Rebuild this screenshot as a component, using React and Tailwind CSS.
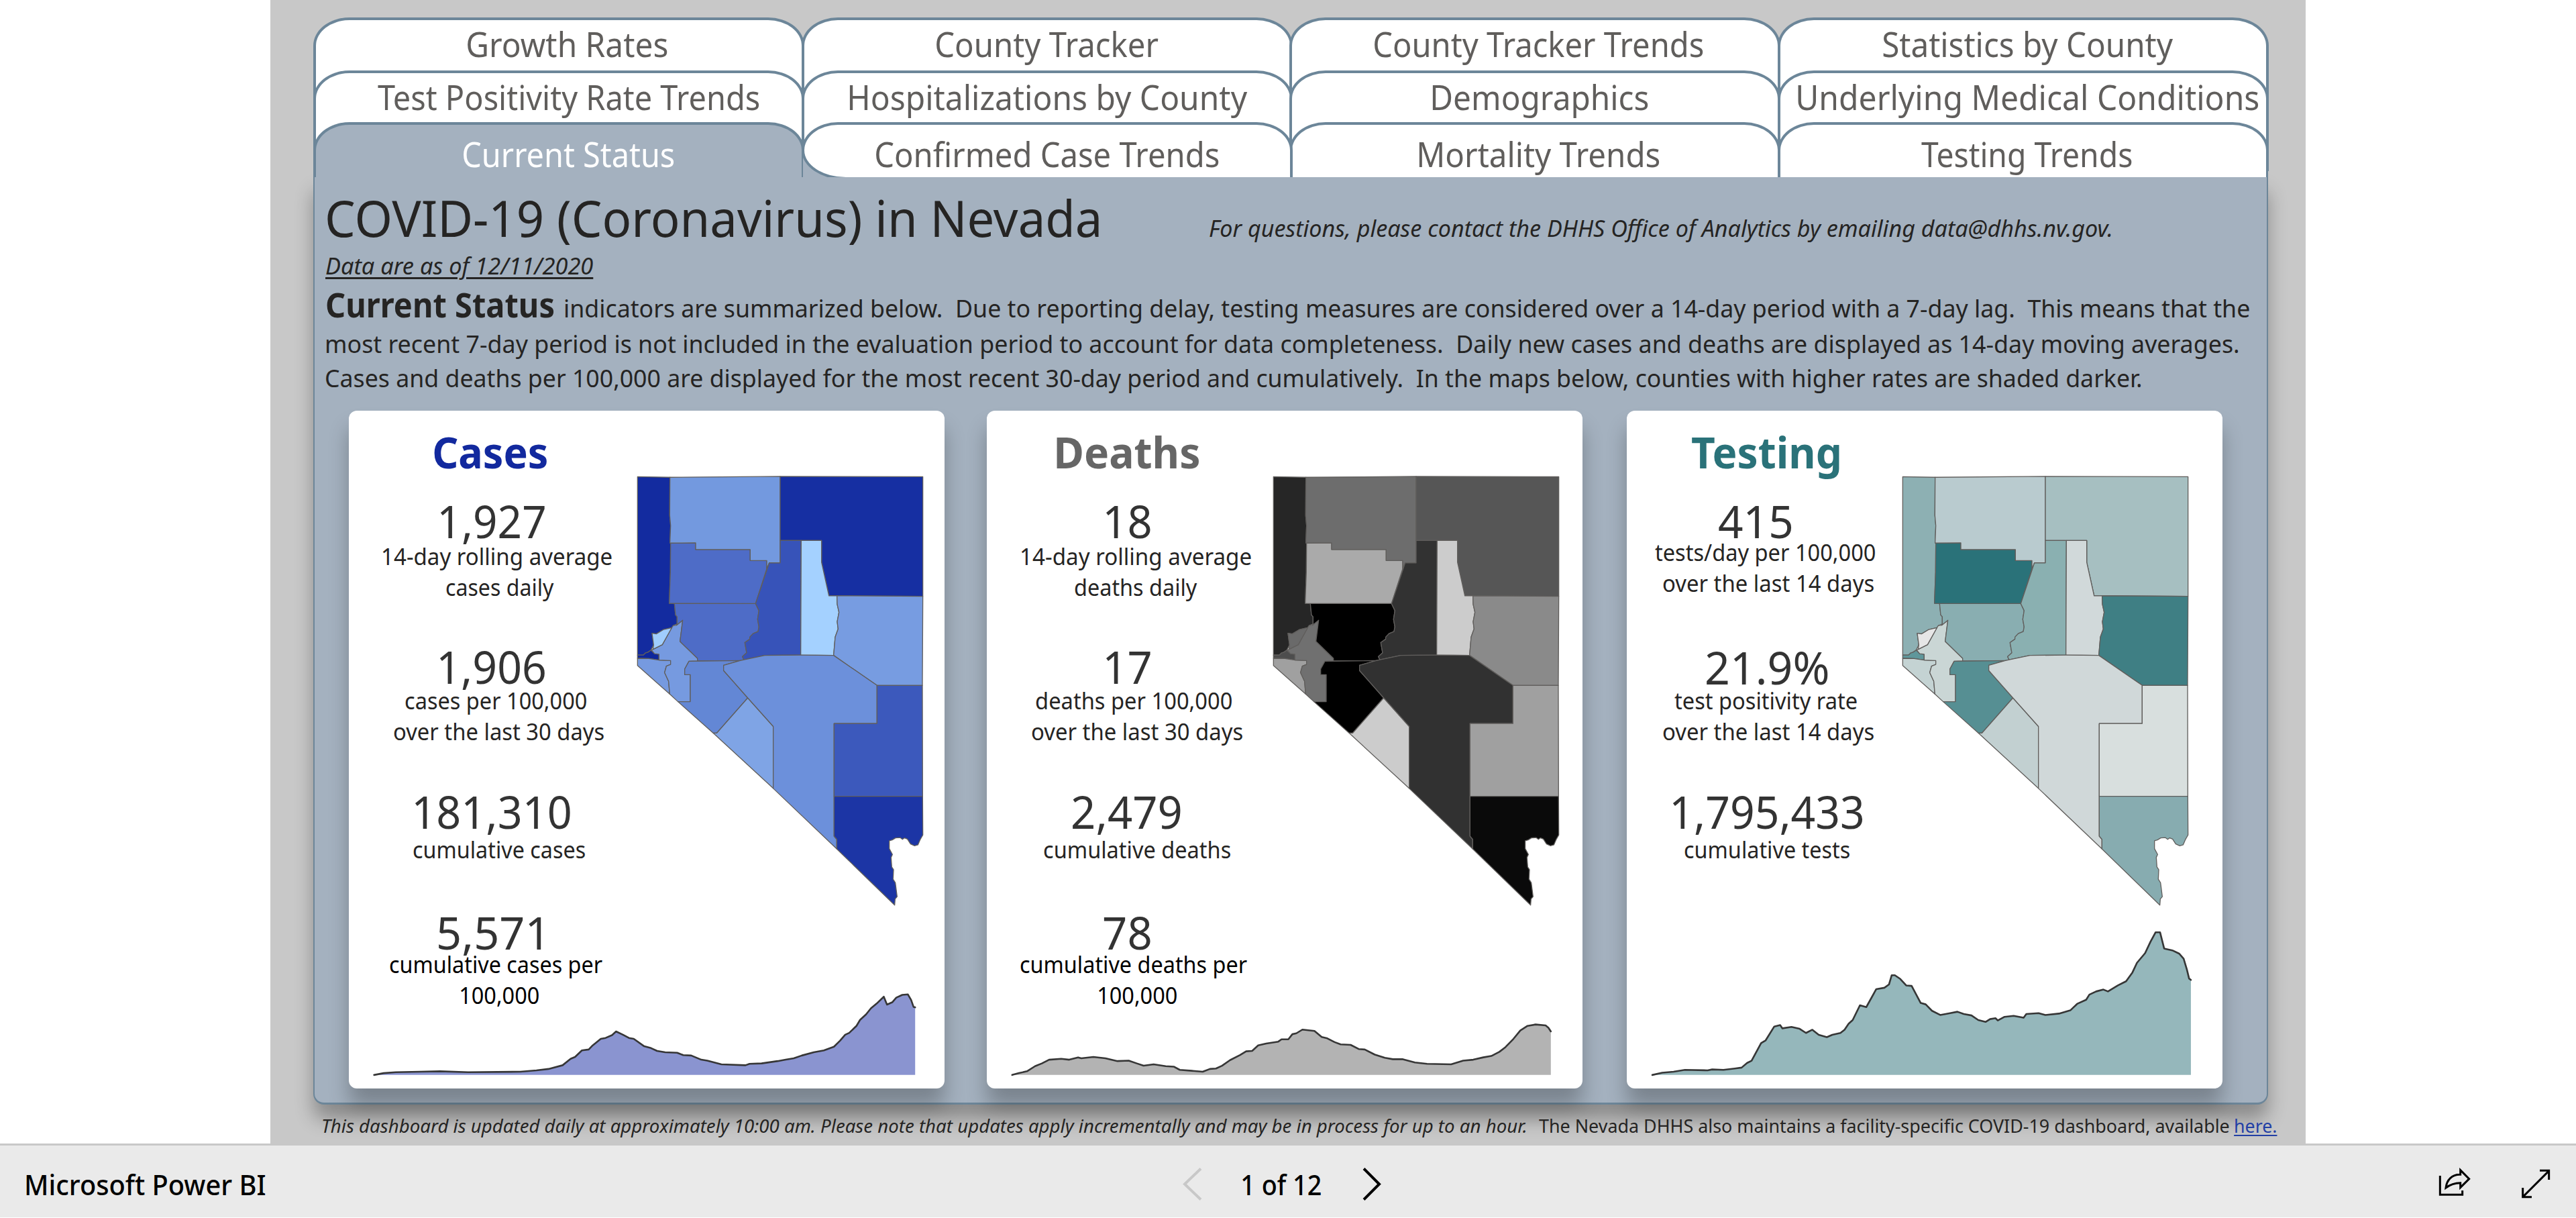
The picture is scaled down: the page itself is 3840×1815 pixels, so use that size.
import React, { useLayoutEffect, useRef, useState } from "react";

/* One line of text whose glyphs are fitted to the width of its box. */
function Fit({ children, className = "", textClass = "" }) {
  const ref = useRef(null);
  const [style, setStyle] = useState(undefined);
  useLayoutEffect(() => {
    const el = ref.current;
    const cs = getComputedStyle(el);
    const ctx = document.createElement("canvas").getContext("2d");
    ctx.font = `${cs.fontStyle} ${cs.fontWeight} ${cs.fontSize} ${cs.fontFamily}`;
    const m = ctx.measureText(children);
    const ink = m.actualBoundingBoxLeft + m.actualBoundingBoxRight;
    const k = el.clientWidth / ink;
    setStyle({ transform: `translateX(${m.actualBoundingBoxLeft * k}px) scaleX(${k})` });
  }, [children]);
  return (
    <div ref={ref} className={`shrink-0 whitespace-pre ${className}`}>
      <span className={`inline-block origin-left ${textClass}`} style={style}>{children}</span>
    </div>
  );
}

const TAB_ROWS = [
  [
    ["Growth Rates", "ml-[226px] w-[298px]"],
    ["County Tracker", "ml-[197px] w-[331px]"],
    ["County Tracker Trends", "ml-[123px] w-[490px]"],
    ["Statistics by County", "ml-[153px] w-[433px]"],
  ],
  [
    ["Test Positivity Rate Trends", "ml-[92px] w-[569px]"],
    ["Hospitalizations by County", "ml-[67px] w-[594px]"],
    ["Demographics", "ml-[209px] w-[322px]"],
    ["Underlying Medical Conditions", "ml-[26px] w-[687px]"],
  ],
];

const LAST_ROW = [
  ["Mortality Trends", "ml-[189px] w-[359px]"],
  ["Testing Trends", "ml-[210px] w-[314px]"],
];

const TAB = "w-[732px] border-4 border-b-0 border-[#6c8699] [border-radius:54px_54px_0_0/42px_42px_0_0]";

function Tabs() {
  return (
    <nav className="relative z-10 ml-[64px] w-[2914px] pt-[26px] text-[51px] leading-[71px] text-[#605e5c]">
      {TAB_ROWS.map((row, i) => (
        <div key={i} className={i === 0 ? "grid h-[79px] grid-cols-[727.5px_727.5px_727.5px_727.5px]" : "grid h-[77px] grid-cols-[727.5px_727.5px_727.5px_727.5px]"}>
          {row.map(([label, box]) => (
            <div key={label} className={`${TAB} h-[150px] bg-white`}>
              <Fit className={box}>{label}</Fit>
            </div>
          ))}
        </div>
      ))}
      <div className="grid h-[82px] grid-cols-[727.5px_727.5px_727.5px_727.5px] overflow-hidden">
        <div className={`${TAB} h-[86px] bg-[#a4b1bf] pt-[8px] text-white`}>
          <Fit className="ml-[220px] w-[314px]">Current Status</Fit>
        </div>
        <div className="relative">
          <div className="absolute bottom-0 left-[2px] h-[41px] w-[70px] bg-[#a4b1bf]" />
          <div className="relative h-[86px] w-[732px] border-4 border-[#6c8699] bg-white pt-[8px] [border-radius:54px_54px_0_66px/42px_42px_0_44px]">
            <Fit className="ml-[107px] w-[511px]">Confirmed Case Trends</Fit>
          </div>
        </div>
        {LAST_ROW.map(([label, box]) => (
          <div key={label} className={`${TAB} h-[86px] bg-white pt-[8px]`}>
            <Fit className={box}>{label}</Fit>
          </div>
        ))}
      </div>
    </nav>
  );
}

const COUNTIES = {
  washoe: "61,47 206,49 205,180 209,215 206,272 209,275 208,375 203,482 226,483 231,522 238,528 238,553 221,558 214,566 178,572 145,587 126,585 133,625 121,643 108,650 96,653 87,660 61,660",
  carson: "61,660 87,660 96,653 108,650 121,643 137,655 157,657 157,677 112,672 61,671",
  douglas: "61,671 112,672 157,677 209,679 209,692 190,698 182,720 200,750 205,794 61,696",
  lyon: "214,566 221,558 236,557 263,540 251,613 329,671 329,680 291,681 272,708 272,727 297,727 297,820 242,820 205,794 200,750 182,720 190,698 209,692 209,679 157,677 157,657 137,655 124,643 130,640 172,624",
  storey: "126,585 145,587 178,572 214,566 172,624 130,640 133,625",
  churchill: "226,483 589,483 604,507 598,537 604,563 600,579 578,586 563,598 563,605 541,617 549,652 530,665 537,676 520,679 329,680 329,671 251,613 263,540 236,557 238,553 238,528 231,522",
  pershing: "209,275 321,274 321,297 565,297 565,335 639,335 639,363 589,483 203,482 208,375",
  humboldt: "206,49 699,46 699,343 650,343 639,363 639,335 565,335 565,297 321,297 321,274 206,275 206,272 209,215 205,180",
  elko: "699,46 1337,47 1337,458 953,456 917,456 884,341 884,266 699,266",
  lander: "699,266 793,266 791,660 630,661 537,676 530,665 549,652 541,617 563,605 563,598 578,586 600,579 604,563 598,537 604,507 589,483 650,343 699,343",
  eureka: "793,266 884,266 884,341 917,456 953,456 954,485 962,513 954,545 958,570 945,598 938,661 791,660",
  whitePine: "953,456 1337,458 1335,764 1132,764 938,661 945,598 958,570 954,545 962,513 954,485",
  mineral: "291,681 520,679 446,695 446,713 554,807 415,928 400,928 242,820 297,820 297,727 272,727 272,708",
  esmeralda: "554,807 668,905 668,1118 400,928 415,928",
  nye: "446,695 520,679 537,676 630,661 791,660 938,661 1132,764 1132,895 940,895 940,1282 952,1293 952,1326 668,1118 668,905 554,807 446,713",
  lincoln: "1132,764 1335,764 1336,1145 940,1145 940,895 1132,895",
  clark: "940,1145 1336,1145 1337,1278 1325,1294 1315,1312 1300,1315 1282,1309 1268,1292 1255,1288 1246,1293 1236,1287 1215,1288 1200,1295 1187,1298 1187,1325 1201,1345 1195,1355 1198,1388 1206,1397 1204,1430 1214,1442 1222,1490 1213,1498 1211,1519 952,1326 952,1293 940,1282",
};

function NevadaMap({ fills }) {
  return (
    <svg className="mt-[78px] h-[680px] w-[470px] shrink-0" viewBox="0 0 1410 1568" preserveAspectRatio="none">
      {Object.entries(COUNTIES).map(([name, points]) => (
        <polygon key={name} points={points} fill={fills[name]} stroke="#605e5c" strokeWidth="1.3" strokeLinejoin="round" vectorEffect="non-scaling-stroke" />
      ))}
    </svg>
  );
}

function Trend({ points, fill, viewBox, className }) {
  const first = points.split(" ")[0].split(",")[0];
  const last = points.split(" ").pop().split(",")[0];
  return (
    <svg className={`shrink-0 ${className}`} viewBox={viewBox} preserveAspectRatio="none">
      <polygon points={`${first},1454 ${points} ${last},1454`} fill={fill} />
      <polyline points={points} fill="none" stroke="#363636" strokeWidth="2.6" strokeLinejoin="round" strokeLinecap="round" vectorEffect="non-scaling-stroke" />
    </svg>
  );
}

const BIG = "text-[68px] leading-[70px] text-[#333333]";
const SMALL = "text-[34px] leading-[46px] text-[#252423]";
const SMALL_BLACK = "text-[34px] leading-[46px] text-black";

const CARDS = [
  {
    title: "Cases",
    titleClass: "ml-[127px] w-[168px] text-[#12299e]",
    lines: [
      ["1,927", BIG, "mt-[28px] ml-[137px] w-[155px]"],
      ["14-day rolling average", SMALL, "-mt-[5px] ml-[51px] w-[341px]"],
      ["cases daily", SMALL, "ml-[145px] w-[161px]"],
      ["1,906", BIG, "mt-[60px] ml-[136px] w-[156px]"],
      ["cases per 100,000", SMALL, "-mt-[7px] ml-[84px] w-[270px]"],
      ["over the last 30 days", SMALL, "ml-[67px] w-[313px]"],
      ["181,310", BIG, "mt-[61px] ml-[99px] w-[231px]"],
      ["cumulative cases", SMALL, "-mt-[1px] ml-[96px] w-[256px]"],
      ["5,571", BIG, "mt-[65px] ml-[134px] w-[153px]"],
      ["cumulative cases per", SMALL_BLACK, "-mt-[10px] ml-[61px] w-[317px]"],
      ["100,000", SMALL_BLACK, "ml-[167px] w-[116px]"],
    ],
    column: "w-[410px]",
    fills: { washoe: "#132b9f", humboldt: "#7399df", elko: "#162fa2", pershing: "#4e6cc7", churchill: "#4e6cc7", lander: "#3753b9", eureka: "#a4d1ff", whitePine: "#779ce1", lincoln: "#3c59bc", clark: "#1c35a5", nye: "#6c90db", esmeralda: "#7fa4e5", mineral: "#6387d5", lyon: "#769ae0", douglas: "#769ae0", storey: "#a0cdfd", carson: "#0f279c" },
    trend: {
      fill: "#8a94d0",
      viewBox: "90 1260 1360 200",
      className: "ml-[34px] h-[138px] w-[815px]",
      points: "96,1454 120,1450 150,1448 210,1447 260,1446 330,1448 460,1447 500,1444 530,1441 565,1433 585,1419 596,1415 613,1401 630,1399 640,1390 660,1376 672,1374 688,1368 698,1360 715,1367 730,1374 742,1376 768,1392 785,1396 800,1402 820,1405 850,1406 865,1411 885,1412 910,1421 925,1423 960,1431 1020,1433 1030,1430 1060,1429 1100,1424 1120,1421 1140,1418 1160,1412 1190,1405 1215,1401 1240,1393 1255,1380 1268,1367 1278,1363 1296,1348 1305,1335 1320,1323 1332,1310 1346,1300 1364,1285 1372,1302 1385,1297 1395,1287 1410,1281 1424,1280 1432,1292 1438,1307 1442,1308",
    },
  },
  {
    title: "Deaths",
    titleClass: "ml-[104px] w-[212px] text-[#666666]",
    lines: [
      ["18", BIG, "mt-[28px] ml-[178px] w-[66px]"],
      ["14-day rolling average", SMALL, "-mt-[5px] ml-[52px] w-[342px]"],
      ["deaths daily", SMALL, "ml-[131px] w-[183px]"],
      ["17", BIG, "mt-[60px] ml-[178px] w-[66px]"],
      ["deaths per 100,000", SMALL, "-mt-[7px] ml-[73px] w-[292px]"],
      ["over the last 30 days", SMALL, "ml-[67px] w-[314px]"],
      ["2,479", BIG, "mt-[61px] ml-[128px] w-[161px]"],
      ["cumulative deaths", SMALL, "-mt-[1px] ml-[85px] w-[278px]"],
      ["78", BIG, "mt-[65px] ml-[174px] w-[70px]"],
      ["cumulative deaths per", SMALL_BLACK, "-mt-[10px] ml-[50px] w-[338px]"],
      ["100,000", SMALL_BLACK, "ml-[167px] w-[116px]"],
    ],
    column: "w-[407px]",
    fills: { washoe: "#262626", humboldt: "#6d6d6d", elko: "#565656", pershing: "#aaaaaa", churchill: "#000000", lander: "#323232", eureka: "#cccccc", whitePine: "#8a8a8a", lincoln: "#a0a0a0", clark: "#0a0a0a", nye: "#313131", esmeralda: "#cccccc", mineral: "#000000", lyon: "#707070", douglas: "#a0a0a0", storey: "#6a6a6a", carson: "#4d4d4d" },
    trend: {
      fill: "#b3b3b3",
      viewBox: "90 1260 1360 200",
      className: "ml-[33px] h-[138px] w-[815px]",
      points: "98,1454 115,1450 135,1446 155,1435 172,1429 190,1421 220,1419 240,1421 262,1416 270,1418 300,1415 330,1418 360,1424 388,1423 408,1429 425,1434 450,1431 480,1435 500,1436 515,1443 545,1445 572,1447 590,1441 605,1440 620,1434 640,1422 665,1411 680,1403 695,1402 710,1390 730,1386 760,1382 768,1377 785,1377 795,1366 805,1364 820,1356 850,1359 868,1372 882,1375 900,1383 915,1388 940,1389 960,1398 975,1399 1000,1410 1025,1417 1045,1420 1070,1420 1100,1427 1130,1430 1190,1431 1220,1423 1245,1421 1270,1416 1290,1413 1310,1404 1325,1394 1345,1376 1362,1358 1380,1348 1400,1345 1425,1347 1432,1352 1438,1360",
    },
  },
  {
    title: "Testing",
    titleClass: "ml-[97px] w-[220px] text-[#2a7279]",
    lines: [
      ["415", BIG, "mt-[28px] ml-[137px] w-[109px]"],
      ["tests/day per 100,000", SMALL, "-mt-[11px] ml-[42px] w-[328px]"],
      ["over the last 14 days", SMALL, "ml-[54px] w-[314px]"],
      ["21.9%", BIG, "mt-[67px] ml-[119px] w-[181px]"],
      ["test positivity rate", SMALL, "-mt-[8px] ml-[71px] w-[272px]"],
      ["over the last 14 days", SMALL, "ml-[54px] w-[314px]"],
      ["1,795,433", BIG, "mt-[61px] ml-[69px] w-[283px]"],
      ["cumulative tests", SMALL, "-mt-[1px] ml-[86px] w-[246px]"],
    ],
    column: "w-[391px]",
    fills: { washoe: "#8db0b3", humboldt: "#b9cbcf", elko: "#a6bfc1", pershing: "#2a7279", churchill: "#89aeb1", lander: "#8ab0b1", eureka: "#d1d9da", whitePine: "#3f7f84", lincoln: "#d8dfde", clark: "#87acb0", nye: "#d0d8d9", esmeralda: "#c2d0d1", mineral: "#568f93", lyon: "#cad6d5", douglas: "#c4d3d3", storey: "#e6e6e6", carson: "#5f979b" },
    trend: {
      fill: "#95b7bb",
      viewBox: "87 1130 1200 330",
      className: "ml-[34px] h-[227px] w-[811px]",
      points: "93,1454 115,1449 140,1447 165,1443 215,1444 225,1442 250,1443 275,1440 290,1438 302,1428 312,1423 333,1385 343,1379 362,1349 375,1346 380,1353 400,1350 418,1354 432,1363 446,1356 460,1367 478,1372 490,1367 508,1363 517,1356 526,1343 535,1335 551,1303 565,1307 587,1268 605,1265 615,1258 621,1238 628,1238 640,1246 653,1260 665,1261 685,1298 696,1301 710,1315 728,1324 750,1320 766,1317 780,1322 797,1325 812,1335 828,1339 838,1333 850,1331 855,1336 870,1328 890,1326 912,1330 918,1322 945,1320 960,1324 990,1321 1015,1314 1030,1300 1050,1291 1057,1280 1072,1273 1088,1269 1098,1273 1120,1260 1138,1251 1152,1232 1162,1211 1180,1190 1192,1165 1203,1145 1213,1145 1222,1180 1240,1184 1255,1191 1265,1202 1272,1225 1277,1245 1281,1248",
    },
  },
];

function Card({ card }) {
  return (
    <section className="flex h-[1010px] w-[888px] shrink-0 flex-col justify-between rounded-[12px] bg-white pb-[16px] shadow-[0_26px_30px_rgba(0,0,0,0.26)]">
      <div className="flex h-[760px]">
        <div className={`shrink-0 ${card.column}`}>
          <h2 className="mt-[21px] text-[65px] leading-[80px] font-bold">
            <Fit className={card.titleClass}>{card.title}</Fit>
          </h2>
          {card.lines.map(([text, type, box], i) => (
            <Fit key={i} className={`${type} ${box}`}>{text}</Fit>
          ))}
        </div>
        <NevadaMap fills={card.fills} />
      </div>
      <Trend {...card.trend} />
    </section>
  );
}

function Panel() {
  return (
    <main className="ml-[64px] h-[1382px] w-[2914px] rounded-b-[16px] border-x-2 border-b-3 border-[#6c8699] bg-[#a4b1bf] text-[#252423] shadow-[0_22px_28px_rgba(0,0,0,0.3)]">
      <div className="flex h-[110px] pt-[11px] pl-[19px]">
        <Fit className="w-[1150px] text-[74px] leading-[100px]">COVID-19 (Coronavirus) in Nevada</Fit>
        <Fit className="mt-[40px] ml-[165px] w-[1344px] text-[35px] leading-[50px] italic">For questions, please contact the DHHS Office of Analytics by emailing data@dhhs.nv.gov.</Fit>
      </div>
      <Fit className="ml-[17px] w-[398px] text-[35px] leading-[44px] italic" textClass="underline decoration-[3px] underline-offset-[4px]">Data are as of 12/11/2020</Fit>
      <div className="mt-[6px] flex h-[60px] items-baseline pl-[18px]">
        <Fit className="w-[338px] text-[50px] leading-[60px] font-bold">Current Status</Fit>
        <Fit className="ml-[17px] w-[2511px] text-[36px] leading-[60px]">indicators are summarized below.  Due to reporting delay, testing measures are considered over a 14-day period with a 7-day lag.  This means that the</Fit>
      </div>
      <Fit className="mt-[4px] ml-[18px] w-[2850px] text-[36px] leading-[50px]">most recent 7-day period is not included in the evaluation period to account for data completeness.  Daily new cases and deaths are displayed as 14-day moving averages.</Fit>
      <Fit className="mt-[1px] ml-[17px] w-[2706px] text-[36px] leading-[50px]">Cases and deaths per 100,000 are displayed for the most recent 30-day period and cumulatively.  In the maps below, counties with higher rates are shaded darker.</Fit>
      <div className="mt-[23px] ml-[51px] grid grid-cols-[951px_954px_888px]">
        {CARDS.map((card) => <Card key={card.title} card={card} />)}
      </div>
    </main>
  );
}

function StatusBar() {
  return (
    <footer className="flex h-[107px] items-center bg-[#eaeaea] text-[41px] leading-[60px] font-medium text-black">
      <Fit className="ml-[39px] w-[356px] pt-[9px]">Microsoft Power BI</Fit>
      <svg className="ml-[1360px] h-[56px] w-[40px]" viewBox="0 0 40 56" fill="none" stroke="#c8c8c8" strokeWidth="4">
        <path d="M35 8.500 L11 31.500 L35 54.500" />
      </svg>
      <Fit className="ml-[57px] w-[117px] pt-[9px]">1 of 12</Fit>
      <svg className="ml-[55px] h-[56px] w-[40px]" viewBox="0 0 40 56" fill="none" stroke="#000000" strokeWidth="4">
        <path d="M9 8.500 L32 31.500 L9 54.500" />
      </svg>
      <svg className="mt-[9px] ml-[1536px] h-[100px] w-[220px]" viewBox="0 0 660 300" fill="none" stroke="#000000" strokeWidth="9">
        <path d="M112 111 V196 H212 V177" />
        <path d="M203 86 L242 125 L203 164 V143 C175 143 155 152 138 165 C142 130 165 105 203 106 Z" />
        <path d="M482 206 L600 88 M558 88 H599 V129 M482 165 V206 H522" />
      </svg>
    </footer>
  );
}

export default function App() {
  return (
    <div className="h-[1815px] w-[3840px] overflow-hidden bg-white font-['Noto_Sans','Open_Sans',sans-serif]">
      <div className="ml-[403px] h-[1704px] w-[3034px] overflow-hidden bg-[#c8c8c8]">
        <Tabs />
        <Panel />
        <div className="relative mt-[11px] ml-[78px] flex text-[28px] leading-[40px] text-[#252423]">
          <Fit className="w-[1794px] italic">This dashboard is updated daily at approximately 10:00 am. Please note that updates apply incrementally and may be in process for up to an hour.</Fit>
          <Fit className="ml-[19px] w-[1029px]">The Nevada DHHS also maintains a facility-specific COVID-19 dashboard, available</Fit>
          <Fit className="ml-[9px] w-[61px] text-[#2340a5]" textClass="underline decoration-2 underline-offset-[3px]">here.</Fit>
        </div>
      </div>
      <div className="h-[3px] bg-[#c8c8c8]" />
      <StatusBar />
    </div>
  );
}
